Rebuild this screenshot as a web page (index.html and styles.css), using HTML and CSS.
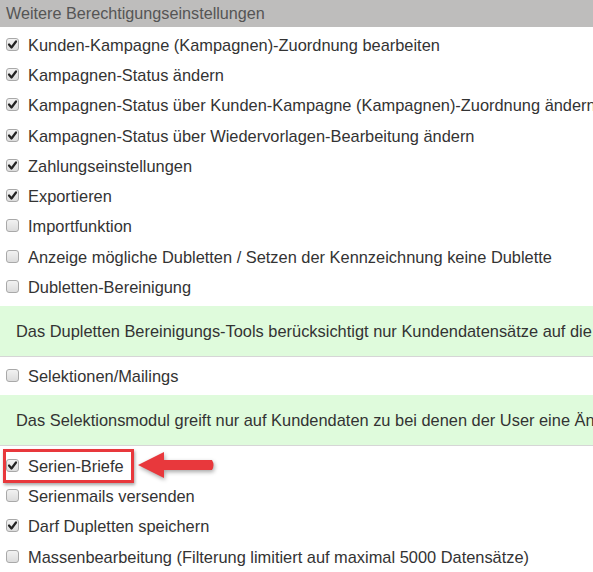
FILE: index.html
```html
<!DOCTYPE html>
<html lang="de">
<head>
    <meta charset="UTF-8">
    <title>Berechtigungen</title>
    <link rel="stylesheet" href="styles.css">
</head>
<body>
    <div class="panel-title">Weitere Berechtigungseinstellungen</div>
    <div class="perm-list">
        <div class="perm"><span class="box on"><svg viewBox="0 0 13 13"><path d="M3 6.5 L5.5 9.5 L10 3.5" /></svg></span>Kunden-Kampagne (Kampagnen)-Zuordnung bearbeiten</div>
        <div class="perm"><span class="box on"><svg viewBox="0 0 13 13"><path d="M3 6.5 L5.5 9.5 L10 3.5" /></svg></span>Kampagnen-Status ändern</div>
        <div class="perm"><span class="box on"><svg viewBox="0 0 13 13"><path d="M3 6.5 L5.5 9.5 L10 3.5" /></svg></span>Kampagnen-Status über Kunden-Kampagne (Kampagnen)-Zuordnung ändern</div>
        <div class="perm"><span class="box on"><svg viewBox="0 0 13 13"><path d="M3 6.5 L5.5 9.5 L10 3.5" /></svg></span>Kampagnen-Status über Wiedervorlagen-Bearbeitung ändern</div>
        <div class="perm"><span class="box on"><svg viewBox="0 0 13 13"><path d="M3 6.5 L5.5 9.5 L10 3.5" /></svg></span>Zahlungseinstellungen</div>
        <div class="perm"><span class="box on"><svg viewBox="0 0 13 13"><path d="M3 6.5 L5.5 9.5 L10 3.5" /></svg></span>Exportieren</div>
        <div class="perm"><span class="box"></span>Importfunktion</div>
        <div class="perm"><span class="box"></span>Anzeige mögliche Dubletten / Setzen der Kennzeichnung keine Dublette</div>
        <div class="perm"><span class="box"></span>Dubletten-Bereinigung</div>
        <div class="info">Das Dupletten Bereinigungs-Tools berücksichtigt nur Kundendatensätze auf die der User eine Änderungsberechtigung hat.</div>
        <div class="perm"><span class="box"></span>Selektionen/Mailings</div>
        <div class="info">Das Selektionsmodul greift nur auf Kundendaten zu bei denen der User eine Änderungsberechtigung hat.</div>
        <div class="perm marked">
            <span class="box on"><svg viewBox="0 0 13 13"><path d="M3 6.5 L5.5 9.5 L10 3.5" /></svg></span>Serien-Briefe
            <span class="highlight"></span>
            <svg class="arrow" viewBox="0 0 80 32"><path d="M2 16 L28 3 L28 11 L76 11 Q79 16 76 21 L28 21 L28 29 Z" /></svg>
        </div>
        <div class="perm"><span class="box"></span>Serienmails versenden</div>
        <div class="perm"><span class="box on"><svg viewBox="0 0 13 13"><path d="M3 6.5 L5.5 9.5 L10 3.5" /></svg></span>Darf Dupletten speichern</div>
        <div class="perm"><span class="box"></span>Massenbearbeitung (Filterung limitiert auf maximal 5000 Datensätze)</div>
    </div>
</body>
</html>
```

FILE: styles.css
```css
body {
    margin: 0;
    font-family: "Liberation Sans", Arial, sans-serif;
    font-size: 16.4px;
    color: #333;
    background-color: white;
    overflow: hidden;
}
.panel-title {
    background-color: #bebdbc;
    color: #555;
    font-size: 16.2px;
    height: 27px;
    line-height: 27px;
    padding-left: 6px;
    white-space: nowrap;
}
.perm-list {
    padding-top: 3px;
}
.perm {
    display: flex;
    align-items: center;
    height: 30.3px;
    padding-left: 6px;
    white-space: nowrap;
}
.box {
    width: 11px;
    height: 11px;
    margin-right: 9px;
    margin-top: -2px;
    flex-shrink: 0;
    border: 1px solid #a9a9a9;
    border-radius: 3px;
    background: linear-gradient(#f2f2f2, #dcdcdc);
    position: relative;
}
.box svg {
    position: absolute;
    left: -1px;
    top: -1px;
    width: 13px;
    height: 13px;
}
.box svg path {
    fill: none;
    stroke: #222;
    stroke-width: 2.2;
    stroke-linecap: round;
    stroke-linejoin: round;
}
.info {
    background-color: #dffbdc;
    border-bottom: 1px solid #d6d6d6;
    height: 50px;
    line-height: 50px;
    padding-left: 16px;
    margin: 3px 0 5px;
    white-space: nowrap;
    overflow: hidden;
}
.marked {
    position: relative;
}
.highlight {
    position: absolute;
    left: 3px;
    top: -2px;
    width: 125px;
    height: 28px;
    border: 3px solid #e8383c;
    box-shadow: 1px 2px 3px rgba(0, 0, 0, 0.35);
}
.arrow {
    position: absolute;
    left: 136px;
    top: -2px;
    width: 80px;
    height: 32px;
    filter: drop-shadow(1px 2px 2px rgba(0, 0, 0, 0.35));
}
.arrow path {
    fill: #e8383c;
}
```
